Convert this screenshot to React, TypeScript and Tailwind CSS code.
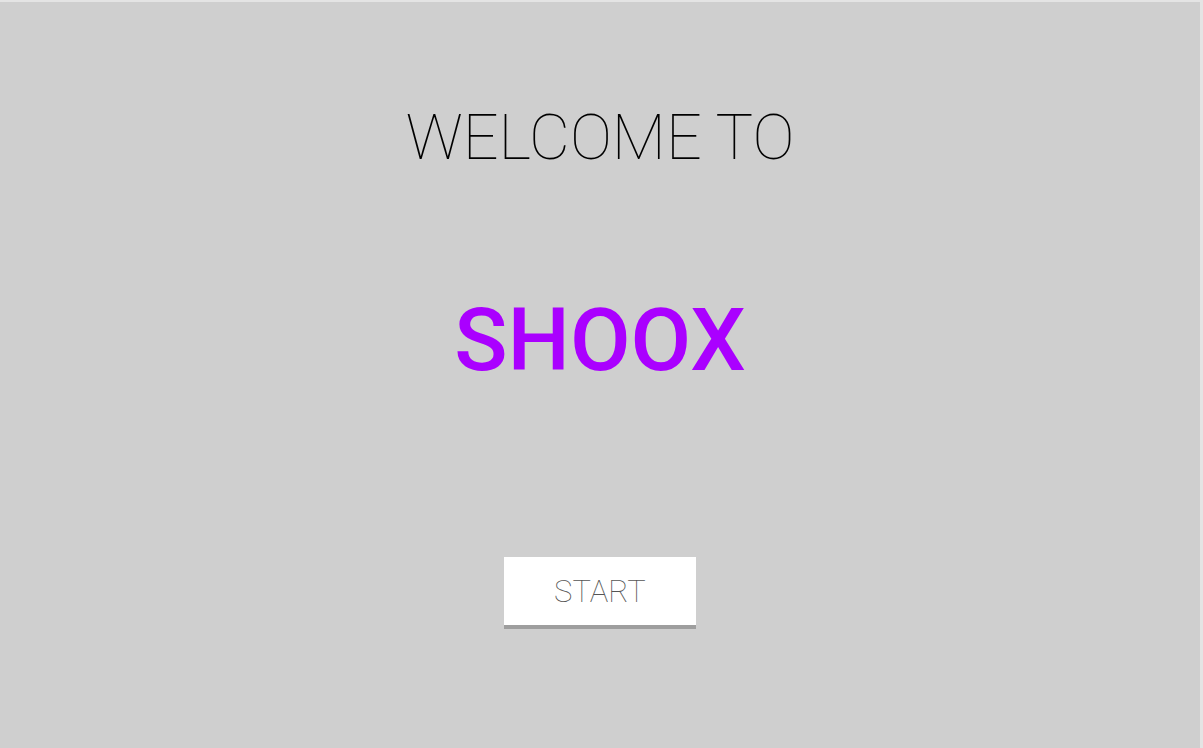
export default function App() {
  return (
    <div
      className="flex h-[748px] w-[1203px] flex-col items-center border-t-2 border-r-[3px] border-t-[#e4e4e4] border-r-[#e4e4e4] bg-[#cfcfcf]"
      style={{ fontFamily: 'Roboto, "Liberation Sans", sans-serif' }}
    >
      <h1 className="mt-[98px] text-[63px] leading-[76px] font-thin text-black">
        WELCOME TO
      </h1>
      <h2 className="mt-[112px] text-[88px] leading-[104px] font-medium text-[#aa00ff]">
        SHOOX
      </h2>
      <button className="mt-[165px] flex h-[72px] w-[192px] items-center justify-center border-b-4 border-[#9e9e9e] bg-white pt-[2px] text-[31px] font-thin text-[#555]">
        START
      </button>
    </div>
  );
}
